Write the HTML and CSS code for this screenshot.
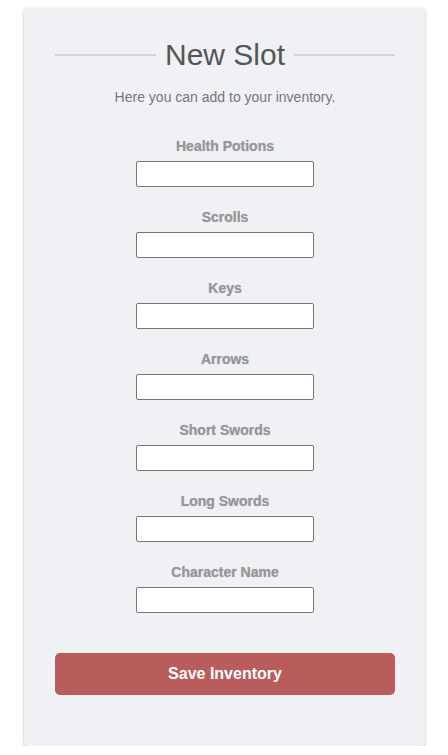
FILE: index.html
```html
<!DOCTYPE html>
<html>
<head>
<meta charset="utf-8">
<link rel="stylesheet" href="styles.css">
</head>
<body>
<div class="card">
  <h1 class="title"><span class="rule"></span><span class="title-text">New Slot</span><span class="rule"></span></h1>
  <p class="subtitle">Here you can add to your inventory.</p>
  <form class="form">
    <div class="field"><label class="label">Health Potions</label><input class="input" type="text"></div>
    <div class="field"><label class="label">Scrolls</label><input class="input" type="text"></div>
    <div class="field"><label class="label">Keys</label><input class="input" type="text"></div>
    <div class="field"><label class="label">Arrows</label><input class="input" type="text"></div>
    <div class="field"><label class="label">Short Swords</label><input class="input" type="text"></div>
    <div class="field"><label class="label">Long Swords</label><input class="input" type="text"></div>
    <div class="field"><label class="label">Character Name</label><input class="input" type="text"></div>
    <button class="save" type="button">Save Inventory</button>
  </form>
</div>
</body>
</html>
```
FILE: styles.css
```css
html, body {
  margin: 0;
  padding: 0;
  background: #ffffff;
  font-family: "Liberation Sans", Arial, sans-serif;
}
.card {
  box-sizing: border-box;
  width: 401px;
  margin: 8px 0 0 24px;
  padding: 29px 30px 51px 31px;
  background: #f0f1f5;
  border-radius: 4px;
  box-shadow: 0 1px 3px rgba(0,0,0,0.3);
}
.title {
  display: flex;
  align-items: center;
  gap: 9px;
  margin: 0;
  font-size: 30px;
  font-weight: normal;
  line-height: 36px;
  color: #555555;
}
.rule {
  flex: 1;
  height: 2px;
  background: #d3d3d5;
}
.subtitle {
  margin: 16px 0 0;
  text-align: center;
  font-size: 14px;
  line-height: 16px;
  color: #777777;
}
.form {
  display: flex;
  flex-direction: column;
  align-items: center;
  margin-top: 33px;
}
.field {
  display: flex;
  flex-direction: column;
  align-items: center;
  margin-bottom: 22px;
}
.label {
  font-size: 14px;
  font-weight: bold;
  line-height: 16px;
  color: #969696;
  text-shadow: 0 0 1px rgba(0,0,0,0.25);
  margin-bottom: 7px;
}
.input {
  box-sizing: border-box;
  width: 178px;
  height: 26px;
  margin: 0;
  border: 1px solid #767676;
  border-radius: 2px;
  background: #ffffff;
}
.save {
  align-self: stretch;
  margin-top: 18px;
  height: 42px;
  border: none;
  border-radius: 5px;
  background: #b85c5c;
  color: #ffffff;
  font-family: "Liberation Sans", Arial, sans-serif;
  font-size: 16px;
  font-weight: bold;
}
```
